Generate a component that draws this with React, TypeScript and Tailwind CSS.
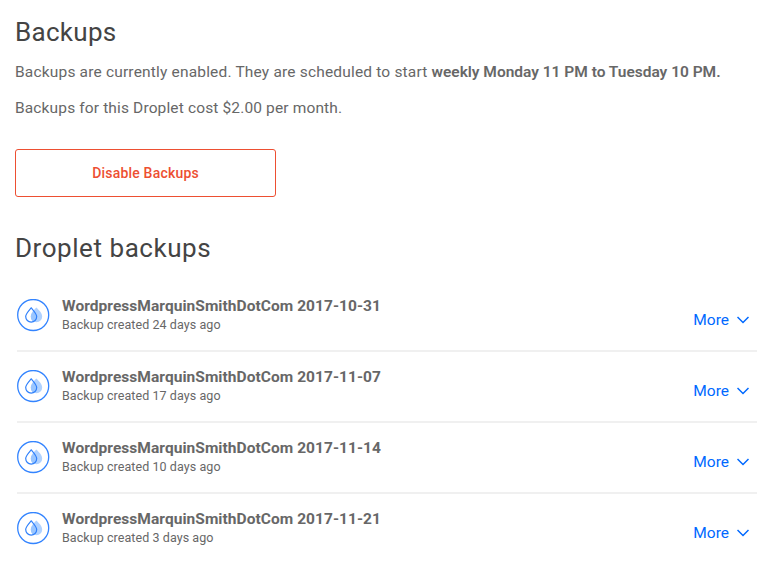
type Backup = {
  name: string;
  date: string;
  age: string;
};

const backups: Backup[] = [
  { name: 'WordpressMarquinSmithDotCom', date: '2017-10-31', age: '24 days ago' },
  { name: 'WordpressMarquinSmithDotCom', date: '2017-11-07', age: '17 days ago' },
  { name: 'WordpressMarquinSmithDotCom', date: '2017-11-14', age: '10 days ago' },
  { name: 'WordpressMarquinSmithDotCom', date: '2017-11-21', age: '3 days ago' },
];

function DropletIcon() {
  return (
    <svg className="block shrink-0" width="34" height="34" viewBox="0 0 34 34" fill="none">
      <circle cx="16.2" cy="16" r="15.5" stroke="#3384ff" strokeWidth="1.3" />
      {/* back drop, its overlap with the front one, then the front outline */}
      <path d="M19.300 8.500c3 3 5.900 5.600 5.900 9a5.700 5.700 0 0 1-11.400 0c0-3.400 2.500-6 5.500-9z" fill="#b0d2ff" />
      <path d="M17 12.300c1.600 1.900 2.700 3.600 2.700 5.500a5.300 5.300 0 0 1-3.500 4.900c-1.500-1.200-2.400-3-2.400-5.200 0-2 1.400-3.700 3.200-5.200z" fill="#9ac6ff" />
      <path d="M14.200 8.900c-2.800 3.300-5.500 5.900-5.500 8.700a5.500 5.500 0 0 0 11 0c0-2.800-2.700-5.400-5.500-8.700z" stroke="#2f80fb" strokeWidth="1.200" />
    </svg>
  );
}

function BackupRow({ backup }: { backup: Backup }) {
  return (
    <li className="flex h-[71px] border-b-2 border-[#f0f0f0] pt-[18px] last:border-b-0">
      <DropletIcon />
      <div className="ml-[11px] flex-1 whitespace-nowrap">
        <h3 className="-mt-[3px] h-5 text-[15.5px] leading-5 font-bold tracking-[0.05px] text-[#676767]">
          {backup.name} {backup.date}
        </h3>
        <p className="h-[18px] text-[12.5px] leading-[18px] tracking-[0.07px] text-[#676767]">
          Backup created {backup.age}
        </p>
      </div>
      <button className="mt-[11px] mr-2 flex h-5 items-center text-[15.5px] leading-5 text-[#0069ff]">
        More
        <svg className="ml-2 block" width="12" height="8" viewBox="0 0 12 8" fill="none">
          <path d="M0.5 1l5.5 5.500L11.500 1" stroke="#0069ff" strokeWidth="1.500" />
        </svg>
      </button>
    </li>
  );
}

function App() {
  return (
    <main className="h-[574px] overflow-hidden bg-white pt-4 pr-[14px] pl-[15px] font-[Roboto,sans-serif] text-[#676767]">
      <h1 className="h-8 text-[26px] leading-8 font-normal tracking-[0.3px] text-[#444444]">Backups</h1>
      <p className="mt-[14px] h-5 text-[15.5px] leading-5 whitespace-nowrap">
        <span className="tracking-[0.18px]">Backups are currently enabled. They are scheduled to start </span>
        <strong className="font-semibold tracking-[-0.01px]">weekly Monday 11 PM to Tuesday 10 PM.</strong>
      </p>
      <p className="mt-4 h-5 text-[15.5px] leading-5 tracking-[0.14px]">
        <span>Backups for this Droplet cost $2.00 per month.</span>
      </p>
      <button className="mt-[31px] flex h-12 w-[261px] items-center justify-center rounded-[3px] border border-[#ed4f32] text-[14px] font-medium tracking-[0.2px] text-[#ed4f32]">
        Disable Backups
      </button>
      <h2 className="mt-[35px] h-8 text-[26px] leading-8 font-normal tracking-[0.55px] text-[#444444]">
        Droplet backups
      </h2>
      <ul className="mt-[17px] pl-[2px]">
        {backups.map((backup) => (
          <BackupRow key={backup.date} backup={backup} />
        ))}
      </ul>
    </main>
  );
}

export default App;
